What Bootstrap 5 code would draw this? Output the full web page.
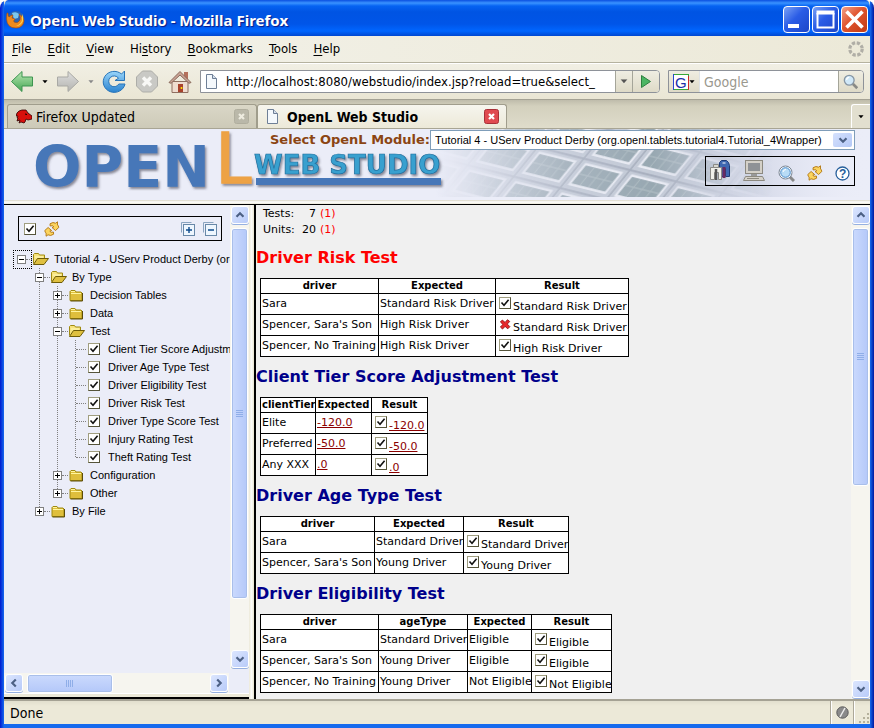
<!DOCTYPE html>
<html lang="en">
<head>
<meta charset="utf-8">
<meta name="viewport" content="width=device-width, initial-scale=1">
<title>OpenL Web Studio</title>
<link rel="stylesheet" href="https://cdn.jsdelivr.net/npm/bootstrap@5.3.0/dist/css/bootstrap.min.css">
<style>
:root{--face:#ece9d8;--lav:#ebedf8;--edge:#aca899}
body{font-family:"DejaVu Sans Condensed","DejaVu Sans",sans-serif;font-size:13px;line-height:16px;color:#000;background:#fff}
button{border:0;background:none;padding:0;color:inherit}
svg{display:block;flex:none}
a{color:inherit;text-decoration:none}
.win{background:var(--face);border-radius:8px 8px 0 0;border:solid #0a3ad8;border-width:0 4px 4px;border-image:linear-gradient(90deg,#0019cf,#166aee 4px,#166aee calc(100% - 4px),#0019a0) 4;overflow:hidden}
.win-shell{border-radius:8px 8px 0 0;overflow:hidden}
.titlebar{height:36px;margin:0 -4px;padding:3px 6px 0 6px;background:linear-gradient(#0a4fe0,#3a93ff 3px,#0563f2 6px,#0054e3 12px,#0055e8 24px,#0066ff 31px,#0047d0)}
.titlebar h1{font:700 15px/20px "Noto Sans",sans-serif;color:#fff;text-shadow:1px 1px 1px #0a1883}
.caps{gap:2px}
.capbtn{width:27px;height:27px;border:1px solid #fff;border-radius:4px;background:linear-gradient(135deg,#7ba2f5,#2a5ce6 45%,#1c46c8)}
.capbtn.cls{background:linear-gradient(135deg,#f0a088,#e0532d 45%,#c03a14)}
.menubar{height:27px;padding:0 6px 0 8px;background:linear-gradient(90deg,#f3f2ea,#ece9d8);border-bottom:1px solid #b5b29f}
.menubar u{text-underline-offset:2px}
.toolbar{height:36px;padding:0 6px;border-top:1px solid #fff;background:linear-gradient(#f1efe4,#eae6d4)}
.chrome-field{height:23px;border:1px solid #8e9299;background:#fff}
.chrome-field input{border:0;outline:0;min-width:0;background:none;font-size:13px;padding:0 0 0 4px}
.chrome-field.search-box input{font-size:14px}
.chrome-field input::placeholder{color:#9a988e;opacity:1}
.fieldbtn{align-self:stretch;background:linear-gradient(#efede2,#dedac7);border-left:1px solid #a5a599}
.round-end{border-radius:0 4px 4px 0;overflow:hidden}
.search-box{width:196px}
.tabstrip{height:30px;padding:4px 0 0 3px;font-size:14px;border-top:1px solid #a5a294;border-bottom:1px solid #a8a594;background:linear-gradient(#bfbcab,#d3d0bd 6px,#dfdccb)}
.btab{width:250px;padding:0 7px 0 8px;border:1px solid #a09d8c;border-bottom:0;border-radius:3px 3px 0 0;background:linear-gradient(#dad7c7,#cdcab8)}
.btab.on{background:linear-gradient(#f6f5ee,#ece9d8);font-weight:700}
.tabmenu{width:19px;border:1px solid #fff;border-radius:3px 0 0 0;border-right:0;border-bottom:0;background:#e2dfcf}
.banner{height:71px;background:var(--lav)}
.banner-art{position:absolute;inset:0 0 auto auto;width:435px}
.picker{padding:1px 15px 0 0;width:600px}
.picker label{font:700 13px/18px "DejaVu Sans",sans-serif;color:#8b4513}
.combo{height:20px;border:1px solid #7f9db9;background:#fff;min-width:0}
.combo select{appearance:none;border:0;outline:0;background:none;width:100%;font:11px/18px "Liberation Sans",sans-serif;padding:0 20px 0 4px;color:#000}
.combo-arrow{position:absolute;right:2px;top:2px;width:19px;height:14px;border-radius:2px;background:linear-gradient(135deg,#d5e1fd,#b4c8f6);pointer-events:none}
.actions{width:150px;height:30px;border:1px solid #000;padding:0 4px 0 3px;margin-top:6px}
.splitline{height:4px;background:linear-gradient(#d9d5c4,#fff 2px,var(--face))}
.workspace{border-top:1px solid #000;min-height:0}
.side{width:245px;background:var(--lav)}
.side-body{width:225px;overflow:hidden;padding:11px 0 0 9px}
.tree-tools{width:204px;height:25px;border:1px solid #000;margin-left:5px;padding:0 4px 0 5px}
.tree{font:11px/18px "Liberation Sans",sans-serif;white-space:nowrap;margin-top:9px}
.tree ul,.tree{list-style:none;padding:0}
.tree ul{position:relative;margin-left:18px}
.tree ul::before{content:"";position:absolute;left:4px;top:0;bottom:9px;border-left:1px dotted #808080}
.tree>li>ul{margin-left:22px}
.trow{height:18px}
.toggler{position:relative;width:9px;height:9px;border:1px solid #808080;background:#fff;flex:none}
.toggler::before{content:"";position:absolute;left:1px;top:3px;width:5px;height:1px;background:#000}
.toggler.plus::after{content:"";position:absolute;left:3px;top:1px;width:1px;height:5px;background:#000}
.dots{width:6px;border-top:1px dotted #808080;flex:none}
.focusbox{width:19px;height:19px;border:1px dotted #000;padding-left:3px;flex:none}
.fold{margin-right:5px}
.leaf{padding-left:5px}
.leaf .dots{width:10px}
.leaf input{margin:0 8px 0 2px}
.tick{appearance:none;width:12px;height:12px;margin:0;flex:none;border:1px solid;border-color:#a09e80 #55543a #55543a #a09e80;border-radius:0;background:#fff url("data:image/svg+xml,%3Csvg xmlns='http://www.w3.org/2000/svg' viewBox='0 0 10 10'%3E%3Cpath d='M1.5 4.5L4 7.2L8.6 1.8' fill='none' stroke='%23111' stroke-width='1.6'/%3E%3C/svg%3E") center/10px no-repeat}
.sb{background:#f6f5ef;width:19px;padding:1px;flex:none}
.sb-h{height:20px;width:auto;margin-right:20px}
.sb button{width:18px;height:18px;border:1px solid #fff;border-radius:3px;background:linear-gradient(135deg,#dce6fe,#b8cbf9);box-shadow:0 1px 0 #96b0e0;flex:none}
.thumb{border:1px solid #fff;border-radius:3px;background:linear-gradient(90deg,#cbdafd,#b4c8f9);box-shadow:0 0 0 1px #a9bfea inset}
.sb-h .thumb{background:linear-gradient(#cbdafd,#b4c8f9);height:19px}
.th-side{height:88%}.th-main{height:57%}.th-hor{width:48%}
.vsplit{width:7px;background:linear-gradient(90deg,var(--face),#fff 3px,var(--face) 4px);border-right:2px solid #000}
.hsplit{height:6px;background:var(--face);border-top:1px solid #fff;border-bottom:2px solid #000}
.report{background:#f0f0f0;font:11px/16px "DejaVu Sans",sans-serif;overflow:hidden;padding-top:1px}
.totals{padding-left:7px}
.totals dt{width:34px;font-weight:400}
.totals dd{margin:0}
.num{width:15px;text-align:right}
.report h2{font:700 16px/22px "DejaVu Sans",sans-serif;color:#00008b;margin:9px 0}
.report h2.fail,.bad{color:#f00}
.grid-t{table-layout:fixed;border-collapse:collapse;background:#fff;margin-left:4px;line-height:14px;white-space:nowrap;color:#000}
.grid-t th,.grid-t td{border:1px solid #000;padding:0 1px}
.grid-t th{text-align:center;font-size:10px}
.grid-t td{height:21px}
.grid-t a{color:#8b0000;text-decoration:underline}
.res{height:20px;padding-left:2px}
.res .tick,.res svg{align-self:flex-start;margin:3px 2px 0 0}
.res span{align-self:flex-end}
.t369{width:369px}.t168{width:168px}.t309{width:309px}.t352{width:352px}
.w55{width:55px}.w56{width:56px}.w64{width:64px}.w80{width:80px}.w89{width:89px}.w105{width:105px}.w114{width:114px}.w117{width:117px}.w118{width:118px}.w133{width:133px}
.statusbar{height:25px;border-top:2px solid #a5a294;padding:0 0 0 6px;font-size:14px;background:linear-gradient(#e2dfce,var(--face) 5px)}
.pane{border-left:1px solid #aca899;box-shadow:inset 1px 0 #fff;width:23px;align-self:stretch}
</style>
<script src="https://cdn.jsdelivr.net/npm/bootstrap@5.3.0/dist/js/bootstrap.bundle.min.js"></script>
</head>
<body>
<svg width="0" height="0" class="position-absolute" aria-hidden="true">
<defs>
<linearGradient id="gg" x1="0" y1="0" x2="0" y2="1"><stop offset="0" stop-color="#b9e8b4"/><stop offset="1" stop-color="#45a552"/></linearGradient>
<linearGradient id="gy" x1="0" y1="0" x2="0" y2="1"><stop offset="0" stop-color="#dedede"/><stop offset="1" stop-color="#b4b4b0"/></linearGradient>
<linearGradient id="gb" x1="0" y1="0" x2="0" y2="1"><stop offset="0" stop-color="#9ad6fb"/><stop offset="1" stop-color="#2b83cf"/></linearGradient>
</defs>
<symbol id="i-folder" viewBox="0 0 16 14"><path d="M1.5 12.5v-9l1-1h4l1 1.5h5l1 1v7.5z" fill="#dfbf3c" stroke="#a08a10"/><path d="M2.5 5.5h10M2.5 3.5h4" stroke="#fff6a0" fill="none"/><path d="M14 5v8H2" fill="none" stroke="#5c4c08"/></symbol>
<symbol id="i-open" viewBox="0 0 17 14"><path d="M1.5 11.5v-9l1-1h4l1 1.5h5v3" fill="#f7e37c" stroke="#a08a10"/><path d="M1.5 12.5l4-6h11l-4.5 6z" fill="#dfc040" stroke="#6e5c08"/><path d="M3 5h8" stroke="#fffbc0"/></symbol>
<symbol id="i-sync" viewBox="0 0 16 16"><path id="arw" d="M6 2.800Q9 .6 11.600 2.200L13.500.8V4q1 .4 1.300 2.500L11.500 9.500 8 6.500 9.800 5.800Q9 4 6.200 5z" fill="#fbd45e" stroke="#b07410" stroke-width=".9" stroke-linejoin="round"/><use href="#arw" transform="rotate(180 7.800 8)"/></symbol>
<symbol id="i-page" viewBox="0 0 13 15"><path d="M1.500.5h6l4 4v10h-10z" fill="#f4f8fc" stroke="#6e7f96"/><path d="M7.500.5v4h4" fill="#d6e0ec" stroke="#6e7f96"/></symbol>
<symbol id="i-chev" viewBox="0 0 10 10"><path d="M1.500 6.800L5 3.300l3.500 3.500" fill="none" stroke="#4d6185" stroke-width="2.200"/></symbol>
<symbol id="i-tri" viewBox="0 0 7 4"><path d="M.5 0h6L3.500 3.500z"/></symbol>
<symbol id="i-lens" viewBox="0 0 18 18"><path d="M11 11l5 5" stroke="#8a8a86" stroke-width="3"/><circle cx="7" cy="7" r="5.500" fill="#d0e8f8" stroke="#8796a4" stroke-width="1.500"/><path d="M4 6.500a3.200 3.200 0 013-2.700" stroke="#fff" stroke-width="1.500" fill="none"/></symbol>
<symbol id="i-x" viewBox="0 0 13 13"><path d="M3.600 2.200l3 2.600 2.600-3 2.400 2-2.600 2.800 2.800 2.800-2.300 2.300-2.900-2.600-2.800 2.900-2.300-2.200L4.200 7 1.500 4.300z" fill="#e8282a" stroke="#8c0c0c" stroke-width=".9"/></symbol>
</svg>
<div class="win-shell vh-100">
<div class="win d-flex flex-column h-100">
  <header class="titlebar d-flex align-items-center flex-shrink-0">
    <svg width="20" height="20" viewBox="0 0 20 20"><circle cx="10" cy="9.500" r="8.500" fill="#2a64b4"/><path d="M6 3q4-2 7 1l-1 4-4 1z" fill="#7cc8ee"/><path d="M2 3q0 3 1 4 2-2 4-2l-1 3 3 1q-2 2-1 3 4 2 6-2 1-3-1-6 5 3 5 7-1 7-8 7-9 0-9.500-9 0-3 .5-6z" fill="#ef8a1d" stroke="#a84a08" stroke-width=".6"/><path d="M16 4q2 3 1 7-2 5-7 5 5-2 6-6z" fill="#fbd24e"/></svg>
    <h1 class="m-0 ms-1 flex-grow-1 text-nowrap">OpenL Web Studio - Mozilla Firefox</h1>
    <div class="caps d-flex">
      <button class="capbtn" aria-label="Minimize"><svg width="25" height="25"><rect x="4" y="17" width="11" height="4" fill="#fff"/></svg></button>
      <button class="capbtn" aria-label="Maximize"><svg width="25" height="25"><path d="M4.500 6v14.500h16V6" fill="none" stroke="#fff" stroke-width="2"/><path d="M3.500 5.500h18" stroke="#fff" stroke-width="4"/></svg></button>
      <button class="capbtn cls" aria-label="Close"><svg width="25" height="25"><path d="M4.500 4.500l16 16m0-16l-16 16" stroke="#fff" stroke-width="3.600"/></svg></button>
    </div>
  </header>
  <nav class="menubar d-flex align-items-center gap-3 flex-shrink-0" aria-label="Menu">
    <a href="#"><u>F</u>ile</a><a href="#"><u>E</u>dit</a><a href="#"><u>V</u>iew</a><a href="#">Hi<u>s</u>tory</a><a href="#"><u>B</u>ookmarks</a><a href="#"><u>T</u>ools</a><a href="#"><u>H</u>elp</a>
    <svg class="ms-auto" width="16" height="16" viewBox="0 0 16 16"><circle cx="8" cy="8" r="6.200" fill="none" stroke="#b0aea6" stroke-width="3.200" stroke-dasharray="3.300 1.570"/></svg>
  </nav>
  <div class="toolbar d-flex align-items-center flex-shrink-0">
    <button aria-label="Back"><svg width="24" height="24"><path d="M1.500 11.500L12 1.500v5.500h10.500v9H12v5.500z" fill="url(#gg)" stroke="#3d9450"/></svg></button>
    <button class="px-2" aria-label="Back history"><svg width="6" height="4"><use href="#i-tri"/></svg></button>
    <button aria-label="Forward"><svg width="24" height="24"><path d="M22.500 11.500L12 1.500v5.500H1.500v9H12v5.500z" fill="url(#gy)" stroke="#a9a9a5"/></svg></button>
    <button class="px-2" aria-label="Forward history"><svg width="6" height="4" fill="#888"><use href="#i-tri"/></svg></button>
    <button aria-label="Reload"><svg width="24" height="24"><path d="M16.500 8.200A5.400 5.400 0 1016.800 14H23A11 10.500 0 1119.500 4L22.500 1v9.500H13z" fill="url(#gb)" stroke="#2874b8"/></svg></button>
    <button class="ms-2 me-2" aria-label="Stop"><svg width="26" height="24"><path d="M8.500 1h9l6 6v9l-6 6h-9l-6-6V7z" fill="#c9c9c5" stroke="#adada8"/><path d="M9 7.500l8 8m0-8l-8 8" stroke="#f8f8f6" stroke-width="3.400"/></svg></button>
    <button aria-label="Home"><svg width="24" height="24"><path d="M16 2h4v7h-4z" fill="#b5705c"/><path d="M4 11.500h16V22.500H4z" fill="#efdccf" stroke="#8f6f60"/><path d="M1 12.500L12 1.500l11 11-2 .8L12 5 3 13.300z" fill="#c9a294" stroke="#8a6a5c"/><path d="M10 14h5v8h-5z" fill="#a8422c"/><circle cx="13.500" cy="18" r="1" fill="#fe0"/></svg></button>
    <div class="chrome-field round-end d-flex align-items-center flex-grow-1 ms-2">
      <svg class="ms-1" width="13" height="15"><use href="#i-page"/></svg>
      <input class="flex-grow-1 ms-1" aria-label="Address" value="http://localhost:8080/webstudio/index.jsp?reload=true&amp;select_">
      <button class="fieldbtn px-1" aria-label="Show addresses"><svg width="8" height="5" viewBox="0 0 7 4" fill="#555"><use href="#i-tri"/></svg></button>
      <button class="fieldbtn px-2" aria-label="Go"><svg width="10" height="13"><path d="M.5.5v12l9-6z" fill="#4cb563" stroke="#2f8040"/></svg></button>
    </div>
    <div class="chrome-field search-box round-end d-flex align-items-center ms-2">
      <button class="fieldbtn border-0 border-end d-flex align-items-center ps-1 pe-1" aria-label="Search engine"><svg width="16" height="16"><rect x=".5" y=".5" width="15" height="15" fill="#fff" stroke="#38a838"/><path d="M.5 0v16" stroke="#2848d0"/><path d="M15.500 2v14" stroke="#d02828"/><text x="2" y="14" font-family="Liberation Sans,sans-serif" font-size="15" fill="#1a2fa8">G</text></svg><svg width="6" height="4"><use href="#i-tri"/></svg></button>
      <input class="flex-grow-1" aria-label="Search" placeholder="Google">
      <button class="fieldbtn px-1" aria-label="Search"><svg width="16" height="16"><use href="#i-lens"/></svg></button>
    </div>
  </div>
  <div class="tabstrip d-flex flex-shrink-0">
    <div class="btab d-flex align-items-center">
      <svg width="16" height="15" viewBox="0 0 16 15"><path d="M1 4l2-2 3-1h4l2 3 4 3v3l-4 1-2-1-1 3-1 1-3-1-2 1 1-3-3 1 1-3H1l1-2-2 0z" fill="#d8100c" stroke="#300" stroke-width=".8"/><path d="M9 5l2 .5" stroke="#000"/></svg>
      <span class="ms-1 flex-grow-1">Firefox Updated</span>
      <button aria-label="Close tab"><svg width="15" height="15"><rect x=".5" y=".5" width="14" height="14" rx="2" fill="#bab8a9" stroke="#b0ae9e"/><path d="M5 5l5 5m0-5l-5 5" stroke="#eeece0" stroke-width="2.200"/></svg></button>
    </div>
    <div class="btab on d-flex align-items-center">
      <svg width="13" height="15"><use href="#i-page"/></svg>
      <span class="ms-2 flex-grow-1">OpenL Web Studio</span>
      <button aria-label="Close tab"><svg width="15" height="15"><rect x=".5" y=".5" width="14" height="14" rx="2" fill="#e04a50" stroke="#a83038"/><path d="M5 5l5 5m0-5l-5 5" stroke="#fff" stroke-width="2.200"/></svg></button>
    </div>
    <button class="tabmenu ms-auto d-flex align-items-center justify-content-center" aria-label="List tabs"><svg width="6" height="4"><use href="#i-tri"/></svg></button>
  </div>

  <div class="banner position-relative d-flex flex-shrink-0">
    <svg class="banner-art" height="71" viewBox="0 0 435 71" aria-hidden="true">
      <defs>
        <pattern id="tiles" width="44" height="28" patternUnits="userSpaceOnUse" patternTransform="matrix(1.05 .26 -.85 1.05 10 -6)"><rect width="44" height="28" fill="#c3cad6"/><path d="M0 1h44M1 0v28" stroke="#a3abba" stroke-width="1.500"/><rect x="5" y="4" width="36" height="21" fill="#eef0f7"/><rect x="7" y="6" width="32" height="17" fill="#94a5ae"/><path d="M15 6v17M23 6v17M31 6v17M7 14h32" stroke="#a9b8be"/></pattern>
        <linearGradient id="fade"><stop offset="0" stop-color="#000"/><stop offset=".08" stop-color="#1c1c1c"/><stop offset=".3" stop-color="#aaa"/><stop offset=".5" stop-color="#eee"/><stop offset=".66" stop-color="#333"/><stop offset=".78" stop-color="#000"/></linearGradient>
        <linearGradient id="shade"><stop offset="0" stop-color="#9fa9bc" stop-opacity="0"/><stop offset=".5" stop-color="#9fa9bc" stop-opacity=".5"/><stop offset=".75" stop-color="#c3c9dc" stop-opacity=".5"/><stop offset="1" stop-color="#ebedf8" stop-opacity="0"/></linearGradient>
        <mask id="fm"><rect width="435" height="71" fill="url(#fade)"/></mask>
      </defs>
      <rect width="435" height="68" fill="url(#shade)"/>
      <rect width="435" height="68" fill="url(#tiles)" mask="url(#fm)"/>
    </svg>
    <svg class="position-absolute top-0 start-0" width="450" height="71" role="img" aria-label="OpenL Web Studio">
      <defs><filter id="sh" x="-5%" y="-10%" width="112%" height="130%"><feDropShadow dx="1.500" dy="2" stdDeviation="1.200" flood-color="#445" flood-opacity=".6"/></filter></defs>
      <g filter="url(#sh)">
        <text x="29" y="58" font-family="DejaVu Sans,sans-serif" font-weight="700" font-size="57" fill="#4677b8">OPEN</text>
        <text x="211" y="54" font-family="Noto Sans,sans-serif" font-size="72" fill="#eda244" stroke="#eda244" stroke-width="1.500">L</text>
        <text x="250" y="45" font-family="DejaVu Sans,sans-serif" font-weight="700" font-size="26" fill="#39a0cf" stroke="#1c6d9c" stroke-width=".7">WEB STUDIO</text>
        <rect x="252" y="49" width="185" height="7" fill="#4677b8"/>
      </g>
    </svg>
    <div class="picker ms-auto position-relative d-flex flex-column align-items-end">
      <div class="d-flex w-100 align-items-center">
        <label for="module" class="text-nowrap">Select OpenL Module:</label>
        <div class="combo position-relative flex-grow-1">
          <select id="module"><option>Tutorial 4 - UServ Product Derby (org.openl.tablets.tutorial4.Tutorial_4Wrapper)</option></select>
          <span class="combo-arrow d-flex align-items-center justify-content-center"><svg width="10" height="10" viewBox="0 0 10 10"><path d="M1.500 3.200L5 6.700l3.500-3.500" fill="none" stroke="#4d6185" stroke-width="2.200"/></svg></span>
        </div>
      </div>
      <div class="actions d-flex align-items-center justify-content-between">
        <button aria-label="Run tests"><svg width="22" height="24"><path d="M10.500 3.500l2-2h5l2 2 1 3v11h-4v-8h-2v8h-4z" fill="#3f68b0" stroke="#1f3c78"/><path d="M15 8v11" stroke="#6a2a60" stroke-width="3"/><path d="M13.500 4h3" stroke="#fff"/><path d="M1.500 8.500h11v12h-3v-7h-4v7h-4z" fill="#f0f0ea" stroke="#8a8a86"/><path d="M4.500 5.500h5v3h-5z" fill="#d8d8d0" stroke="#8a8a86"/><path d="M7 10v11" stroke="#555" stroke-width="2.500"/></svg></button>
        <button aria-label="Console"><svg width="22" height="24"><rect x="2.500" y="1.500" width="17" height="13" fill="#d4d0c8" stroke="#8c8980"/><rect x="5" y="4" width="12" height="8" fill="#8f9296"/><path d="M8 15h6v2H8z" fill="#999"/><path d="M2.500 17.500h17l2 4H.5z" fill="#d4d0c8" stroke="#8c8980"/><path d="M4 19.500h12" stroke="#8c8980"/></svg></button>
        <button class="pt-1" aria-label="Find"><svg width="17" height="17" viewBox="0 0 17 17"><path d="M11 11l5 5" stroke="#888" stroke-width="3"/><circle cx="7.500" cy="7.500" r="6.500" fill="#fff" stroke="#7a8694"/><circle cx="7.500" cy="7.500" r="4.800" fill="#b8dcf6" stroke="#4a8ac8"/><path d="M5 7a3 3 0 013-2.500" stroke="#fff" fill="none"/></svg></button>
        <button class="pt-1" aria-label="Refresh"><svg width="16" height="16"><use href="#i-sync"/></svg></button>
        <button class="pt-1" aria-label="Help"><svg width="15" height="15"><circle cx="7.500" cy="7.500" r="6.500" fill="#fff" stroke="#28609c" stroke-width="1.300"/><text x="4" y="12" font-family="Liberation Sans,sans-serif" font-weight="700" font-size="12" fill="#28609c">?</text></svg></button>
      </div>
    </div>
  </div>
  <div class="splitline flex-shrink-0"></div>

  <div class="workspace d-flex flex-grow-1">
    <aside class="side d-flex flex-column flex-shrink-0">
      <div class="d-flex flex-grow-1">
        <div class="side-body flex-grow-1">
          <div class="tree-tools d-flex align-items-center">
            <input class="tick" type="checkbox" checked aria-label="Select all tests">
            <button class="ms-2" aria-label="Refresh tree"><svg width="16" height="16"><use href="#i-sync"/></svg></button>
            <button class="ms-auto" aria-label="Expand all"><svg width="14" height="14"><path d="M.5 10.500V.5h10" fill="none" stroke="#8aa4c0"/><rect x="2.500" y="2.500" width="11" height="11" fill="#eef6fe" stroke="#6888a8"/><path d="M5 8h6M8 5v6" stroke="#0c4a8c" stroke-width="1.400"/></svg></button>
            <button class="ms-2" aria-label="Collapse all"><svg width="14" height="14"><path d="M.5 10.500V.5h10" fill="none" stroke="#8aa4c0"/><rect x="2.500" y="2.500" width="11" height="11" fill="#eef6fe" stroke="#6888a8"/><path d="M5 8h6" stroke="#0c4a8c" stroke-width="1.400"/></svg></button>
          </div>
          <ul class="tree mb-0">
            <li>
              <div class="trow d-flex align-items-center"><span class="focusbox d-flex align-items-center"><button class="toggler" aria-label="Collapse"></button><i class="dots"></i></span><svg class="fold" width="17" height="14"><use href="#i-open"/></svg>Tutorial 4 - UServ Product Derby (org.openl.tablets)</div>
              <ul>
                <li>
                  <div class="trow d-flex align-items-center"><button class="toggler" aria-label="Collapse"></button><i class="dots"></i><svg class="fold" width="17" height="14"><use href="#i-open"/></svg>By Type</div>
                  <ul>
                    <li class="trow d-flex align-items-center"><button class="toggler plus" aria-label="Expand"></button><i class="dots"></i><svg class="fold" width="17" height="14"><use href="#i-folder"/></svg>Decision Tables</li>
                    <li class="trow d-flex align-items-center"><button class="toggler plus" aria-label="Expand"></button><i class="dots"></i><svg class="fold" width="17" height="14"><use href="#i-folder"/></svg>Data</li>
                    <li>
                      <div class="trow d-flex align-items-center"><button class="toggler" aria-label="Collapse"></button><i class="dots"></i><svg class="fold" width="17" height="14"><use href="#i-open"/></svg>Test</div>
                      <ul>
                        <li><label class="trow leaf d-flex align-items-center"><i class="dots"></i><input class="tick" type="checkbox" checked>Client Tier Score Adjustment Test</label></li>
                        <li><label class="trow leaf d-flex align-items-center"><i class="dots"></i><input class="tick" type="checkbox" checked>Driver Age Type Test</label></li>
                        <li><label class="trow leaf d-flex align-items-center"><i class="dots"></i><input class="tick" type="checkbox" checked>Driver Eligibility Test</label></li>
                        <li><label class="trow leaf d-flex align-items-center"><i class="dots"></i><input class="tick" type="checkbox" checked>Driver Risk Test</label></li>
                        <li><label class="trow leaf d-flex align-items-center"><i class="dots"></i><input class="tick" type="checkbox" checked>Driver Type Score Test</label></li>
                        <li><label class="trow leaf d-flex align-items-center"><i class="dots"></i><input class="tick" type="checkbox" checked>Injury Rating Test</label></li>
                        <li><label class="trow leaf d-flex align-items-center"><i class="dots"></i><input class="tick" type="checkbox" checked>Theft Rating Test</label></li>
                      </ul>
                    </li>
                    <li class="trow d-flex align-items-center"><button class="toggler plus" aria-label="Expand"></button><i class="dots"></i><svg class="fold" width="17" height="14"><use href="#i-folder"/></svg>Configuration</li>
                    <li class="trow d-flex align-items-center"><button class="toggler plus" aria-label="Expand"></button><i class="dots"></i><svg class="fold" width="17" height="14"><use href="#i-folder"/></svg>Other</li>
                  </ul>
                </li>
                <li class="trow d-flex align-items-center"><button class="toggler plus" aria-label="Expand"></button><i class="dots"></i><svg class="fold" width="17" height="14"><use href="#i-folder"/></svg>By File</li>
              </ul>
            </li>
          </ul>
        </div>
        <div class="sb d-flex flex-column">
          <button class="d-flex align-items-center justify-content-center" aria-label="Scroll up"><svg width="10" height="10"><use href="#i-chev"/></svg></button>
          <div class="flex-grow-1 pt-1"><div class="thumb th-side d-flex align-items-center justify-content-center"><svg width="8" height="8"><path d="M0 .5h7m-7 2h7m-7 2h7m-7 2h7" stroke="#8faee8"/></svg></div></div>
          <button class="d-flex align-items-center justify-content-center" aria-label="Scroll down"><svg width="10" height="10"><use href="#i-chev" transform="rotate(180 5 5)"/></svg></button>
        </div>
      </div>
      <div class="sb sb-h d-flex mt-1">
        <button class="d-flex align-items-center justify-content-center" aria-label="Scroll left"><svg width="10" height="10"><use href="#i-chev" transform="rotate(-90 5 5)"/></svg></button>
        <div class="flex-grow-1 px-1"><div class="thumb th-hor d-flex align-items-center justify-content-center"><svg width="8" height="8"><path d="M.5 0v7m2-7v7m2-7v7m2-7v7" stroke="#8faee8"/></svg></div></div>
        <button class="d-flex align-items-center justify-content-center" aria-label="Scroll right"><svg width="10" height="10"><use href="#i-chev" transform="rotate(90 5 5)"/></svg></button>
      </div>
      <div class="hsplit"></div>
    </aside>
    <div class="vsplit flex-shrink-0"></div>
    <main class="report flex-grow-1">
      <dl class="totals m-0">
        <div class="d-flex gap-1"><dt>Tests:</dt><dd class="num">7</dd><dd class="bad">(1)</dd></div>
        <div class="d-flex gap-1"><dt>Units:</dt><dd class="num">20</dd><dd class="bad">(1)</dd></div>
      </dl>
      <h2 class="fail">Driver Risk Test</h2>
      <table class="grid-t t369">
        <colgroup><col class="w118"><col class="w117"><col class="w133"></colgroup>
        <thead><tr><th>driver</th><th>Expected</th><th>Result</th></tr></thead>
        <tbody>
        <tr><td>Sara</td><td>Standard Risk Driver</td><td><label class="res d-flex"><input class="tick" type="checkbox" checked><span>Standard Risk Driver</span></label></td></tr>
        <tr><td>Spencer, Sara's Son</td><td>High Risk Driver</td><td><div class="res d-flex"><svg width="12" height="12"><use href="#i-x"/></svg><span>Standard Risk Driver</span></div></td></tr>
        <tr><td>Spencer, No Training</td><td>High Risk Driver</td><td><label class="res d-flex"><input class="tick" type="checkbox" checked><span>High Risk Driver</span></label></td></tr>
        </tbody>
      </table>
      <h2>Client Tier Score Adjustment Test</h2>
      <table class="grid-t t168">
        <colgroup><col class="w55"><col class="w56"><col class="w56"></colgroup>
        <thead><tr><th>clientTier</th><th>Expected</th><th>Result</th></tr></thead>
        <tbody>
        <tr><td>Elite</td><td><a href="#">-120.0</a></td><td><div class="res d-flex"><input class="tick" type="checkbox" checked aria-label="Elite passed"><span><a href="#">-120.0</a></span></div></td></tr>
        <tr><td>Preferred</td><td><a href="#">-50.0</a></td><td><div class="res d-flex"><input class="tick" type="checkbox" checked aria-label="Preferred passed"><span><a href="#">-50.0</a></span></div></td></tr>
        <tr><td>Any XXX</td><td><a href="#">.0</a></td><td><div class="res d-flex"><input class="tick" type="checkbox" checked aria-label="Any XXX passed"><span><a href="#">.0</a></span></div></td></tr>
        </tbody>
      </table>
      <h2>Driver Age Type Test</h2>
      <table class="grid-t t309">
        <colgroup><col class="w114"><col class="w89"><col class="w105"></colgroup>
        <thead><tr><th>driver</th><th>Expected</th><th>Result</th></tr></thead>
        <tbody>
        <tr><td>Sara</td><td>Standard Driver</td><td><label class="res d-flex"><input class="tick" type="checkbox" checked><span>Standard Driver</span></label></td></tr>
        <tr><td>Spencer, Sara's Son</td><td>Young Driver</td><td><label class="res d-flex"><input class="tick" type="checkbox" checked><span>Young Driver</span></label></td></tr>
        </tbody>
      </table>
      <h2>Driver Eligibility Test</h2>
      <table class="grid-t t352">
        <colgroup><col class="w118"><col class="w89"><col class="w64"><col class="w80"></colgroup>
        <thead><tr><th>driver</th><th>ageType</th><th>Expected</th><th>Result</th></tr></thead>
        <tbody>
        <tr><td>Sara</td><td>Standard Driver</td><td>Eligible</td><td><label class="res d-flex"><input class="tick" type="checkbox" checked><span>Eligible</span></label></td></tr>
        <tr><td>Spencer, Sara's Son</td><td>Young Driver</td><td>Eligible</td><td><label class="res d-flex"><input class="tick" type="checkbox" checked><span>Eligible</span></label></td></tr>
        <tr><td>Spencer, No Training</td><td>Young Driver</td><td>Not Eligible</td><td><label class="res d-flex"><input class="tick" type="checkbox" checked><span>Not Eligible</span></label></td></tr>
        </tbody>
      </table>
    </main>
    <div class="sb d-flex flex-column">
      <button class="d-flex align-items-center justify-content-center" aria-label="Scroll up"><svg width="10" height="10"><use href="#i-chev"/></svg></button>
      <div class="flex-grow-1 pt-1"><div class="thumb th-main d-flex align-items-center justify-content-center"><svg width="8" height="8"><path d="M0 .5h7m-7 2h7m-7 2h7m-7 2h7" stroke="#8faee8"/></svg></div></div>
      <button class="d-flex align-items-center justify-content-center" aria-label="Scroll down"><svg width="10" height="10"><use href="#i-chev" transform="rotate(180 5 5)"/></svg></button>
    </div>
  </div>
  <footer class="statusbar d-flex align-items-center flex-shrink-0">
    <span class="flex-grow-1">Done</span>
    <span class="pane d-flex align-items-center justify-content-center"><svg width="13" height="13"><circle cx="6.500" cy="6.500" r="5.700" fill="#8a8a8a" stroke="#5c5c5c"/><path d="M4 11L9 2" stroke="#eee" stroke-width="1.500"/></svg></span>
    <span class="pane border-end-0 d-flex align-items-end w-auto ps-1"><svg width="12" height="12" fill="#b5b19c"><path d="M9 1h2v2H9zM9 5h2v2H9zM5 5h2v2H5zM9 9h2v2H9zM5 9h2v2H5zM1 9h2v2H1z"/></svg></span>
  </footer>
</div>
</div>
</body>
</html>
